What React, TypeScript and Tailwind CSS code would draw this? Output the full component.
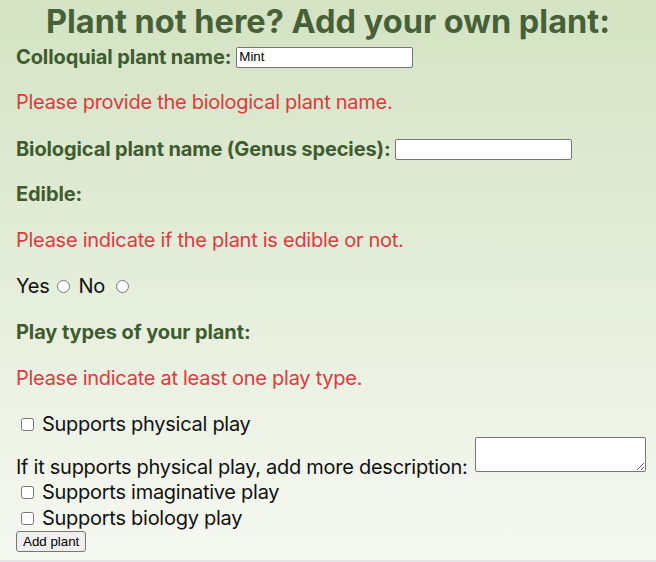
export default function App() {
  return (
    <div className="min-h-[562px] bg-[#e6e6e6]">
      <div className="h-[560px] bg-gradient-to-b from-[#d4e3c3] to-[#f6f8f2] px-4 text-[20px] leading-[26px] tracking-[-0.27px] font-['Inter',sans-serif] text-[#111111]">
        <h1 className="h-[44px] text-center text-[32.5px] font-bold leading-[44px] tracking-normal text-[#476037]">
          Plant not here? Add your own plant:
        </h1>

        <div className="flex h-[26px] items-center gap-[5px]">
          <label className="font-bold tracking-[-0.1px] text-[#3f5b30]">Colloquial plant name:</label>
          <input
            type="text"
            defaultValue="Mint"
            className="h-[21px] w-[177px] rounded-[2px] border border-[#767676] bg-white px-[2px] font-['Liberation_Sans',sans-serif] text-[13.33px] tracking-normal text-black"
          />
        </div>

        <p className="mt-[19px] text-[#dc3a3f]">Please provide the biological plant name.</p>

        <div className="mt-[21px] flex h-[26px] items-center gap-[4px]">
          <label className="font-bold tracking-[-0.12px] text-[#3f5b30]">Biological plant name (Genus species):</label>
          <input
            type="text"
            className="h-[21px] w-[177px] rounded-[2px] border border-[#767676] bg-white px-[2px] font-['Liberation_Sans',sans-serif] text-[13.33px] tracking-normal text-black"
          />
        </div>

        <p className="mt-[19px] font-bold tracking-[-0.1px] text-[#3f5b30]">Edible:</p>

        <p className="mt-[20px] text-[#dc3a3f]">Please indicate if the plant is edible or not.</p>

        <div className="mt-[20px] flex h-[26px] items-center">
          <label>Yes</label>
          <input type="radio" name="edible" className="ml-[8px] mr-[8px] h-[13px] w-[13px]" />
          <label>No</label>
          <input type="radio" name="edible" className="ml-[11px] h-[13px] w-[13px]" />
        </div>

        <p className="mt-[20px] font-bold tracking-[-0.1px] text-[#3f5b30]">Play types of your plant:</p>

        <p className="mt-[20px] text-[#dc3a3f]">Please indicate at least one play type.</p>

        <div className="mt-[20px] flex h-[26px] items-center">
          <input type="checkbox" className="ml-[5px] mr-[8px] h-[13px] w-[13px]" />
          <label>Supports physical play</label>
        </div>

        <div className="flex h-[42px] items-end gap-[7px]">
          <label className="mb-[-1px] whitespace-nowrap leading-[26px]">
            If it supports physical play, add more description:
          </label>
          <textarea className="mb-[7px] h-[35px] w-[171px] shrink-0 rounded-[2px] border border-[#767676] bg-white" />
        </div>

        <div className="flex h-[26px] items-center">
          <input type="checkbox" className="ml-[5px] mr-[8px] h-[13px] w-[13px]" />
          <label>Supports imaginative play</label>
        </div>

        <div className="flex h-[26px] items-center">
          <input type="checkbox" className="ml-[5px] mr-[8px] h-[13px] w-[13px]" />
          <label>Supports biology play</label>
        </div>

        <button
          type="button"
          className="block h-[21px] rounded-[3px] border border-[#767676] bg-[#efefef] px-[6px] font-['Liberation_Sans',sans-serif] text-[13.33px] leading-[19px] tracking-normal text-black"
        >
          Add plant
        </button>
      </div>
    </div>
  );
}
